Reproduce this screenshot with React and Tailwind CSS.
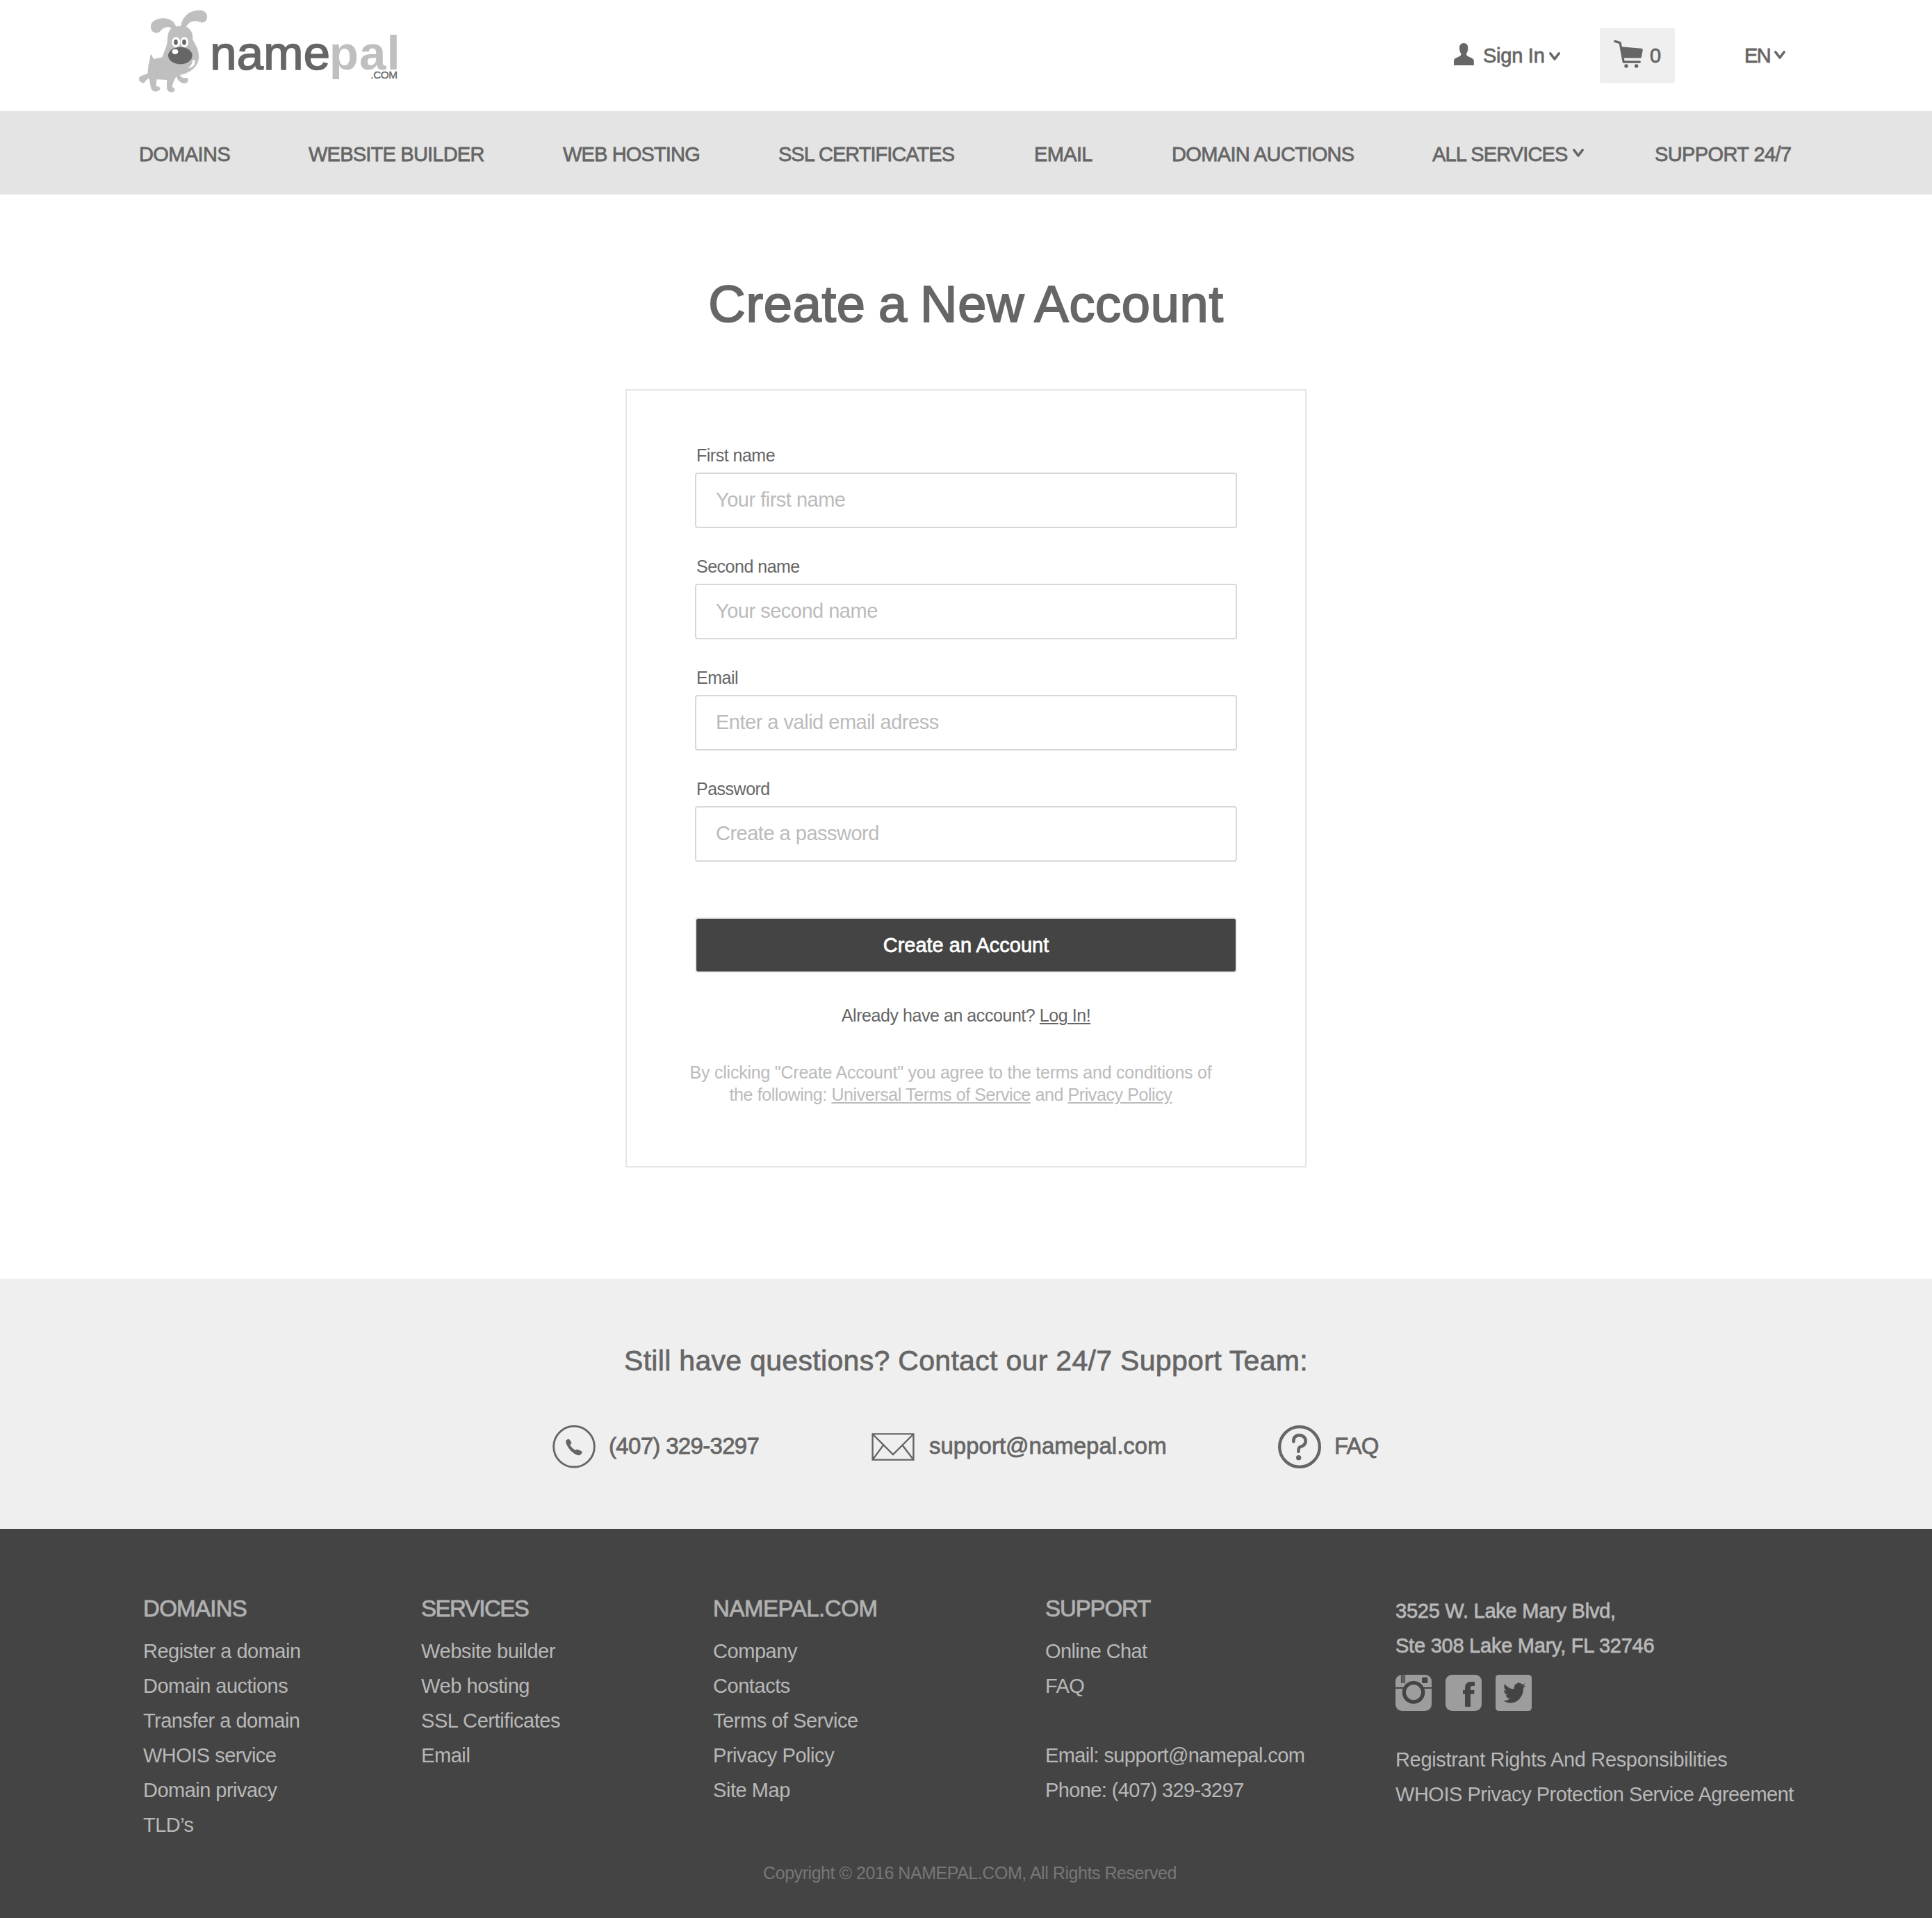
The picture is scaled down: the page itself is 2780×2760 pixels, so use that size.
const MEDIUM = '[-webkit-text-stroke:0.026em_currentColor]';

const navItems = [
  ['DOMAINS', 'tracking-[-0.6px]'],
  ['WEBSITE BUILDER', 'tracking-[-0.78px]'],
  ['WEB HOSTING', 'tracking-[-0.85px]'],
  ['SSL CERTIFICATES', 'tracking-[-0.97px]'],
  ['EMAIL', 'tracking-[-0.65px]'],
  ['DOMAIN AUCTIONS', 'tracking-[-0.65px]'],
  ['ALL SERVICES', 'tracking-[-0.85px]'],
  ['SUPPORT 24/7', 'tracking-[-0.6px]'],
];

const fields = [
  ['First name', 'Your first name', 'text'],
  ['Second name', 'Your second name', 'text'],
  ['Email', 'Enter a valid email adress', 'email'],
  ['Password', 'Create a password', 'password'],
];

const footerColumns = [
  {
    title: 'DOMAINS',
    titleTracking: 'tracking-[-0.7px]',
    listTracking: 'tracking-[-0.52px]',
    items: ['Register a domain', 'Domain auctions', 'Transfer a domain', 'WHOIS service', 'Domain privacy', 'TLD’s'],
  },
  {
    title: 'SERVICES',
    titleTracking: 'tracking-[-1.5px]',
    listTracking: 'tracking-[-0.42px]',
    items: ['Website builder', 'Web hosting', 'SSL Certificates', 'Email'],
  },
  {
    title: 'NAMEPAL.COM',
    titleTracking: 'tracking-[-0.45px]',
    listTracking: 'tracking-[-0.45px]',
    items: ['Company', 'Contacts', 'Terms of Service', 'Privacy Policy', 'Site Map'],
  },
  {
    title: 'SUPPORT',
    titleTracking: 'tracking-[-1.1px]',
    listTracking: 'tracking-[-0.6px]',
    items: ['Online Chat', 'FAQ', '', 'Email: support@namepal.com', 'Phone: (407) 329-3297'],
  },
];

function Chevron({ className }) {
  return (
    <svg viewBox="0 0 16 13" className={`h-[13px] w-4 ${className}`} fill="none" stroke="currentColor" strokeWidth="3.6" strokeLinecap="round" strokeLinejoin="round">
      <path d="M1.9 2 L8 10 L14.1 2" />
    </svg>
  );
}

function Logo() {
  return (
    <svg viewBox="60 0 1116 450" className="h-[150px] w-[372px] overflow-visible">
      <g fill="#bfbfbf">
        <path d="M222 122C216 92 190 76 158 79C126 83 108 98 111 120C114 141 134 147 150 137C160 126 176 109 200 122Z" />
        <path d="M240 120C243 78 272 44 322 44C346 45 355 58 354 74C352 95 336 101 322 95C302 86 274 90 262 120Z" />
        <path d="M205 118C225 110 258 111 272 120C290 133 293 152 292 172C305 193 319 215 318 247C317 286 286 314 237 324C240 332 248 338 258 337C269 334 275 340 271 350C266 362 251 363 240 355C231 351 226 342 221 330C212 345 205 362 203 375C212 379 216 384 214 391C210 401 189 402 182 388C178 375 180 360 181 345L137 343C135 355 133 365 135 373C148 372 156 380 149 388C140 397 125 397 118 390C109 380 108 362 107 350L102 337L88 349C85 360 75 362 69 354C59 350 58 338 62 333C74 322 90 324 98 315C99 300 99 285 104 268C109 255 105 243 112 234C117 239 117 247 124 255L160 247C168 225 179 204 183 178C183 158 184 132 205 118Z" />
      </g>
      <g fill="#fff">
        <ellipse cx="220" cy="182" rx="18" ry="22" />
        <ellipse cx="256" cy="182" rx="17" ry="22" />
        <path d="M299 257C308 276 293 294 270 293C282 287 292 276 290 262Z" />
      </g>
      <g fill="#666">
        <ellipse cx="219" cy="182" rx="8.5" ry="12" />
        <ellipse cx="255" cy="182" rx="8.5" ry="12" />
        <ellipse cx="238" cy="240" rx="52" ry="37" />
      </g>
      <ellipse cx="216" cy="223" rx="13" ry="11" fill="#fff" />
      <text x="366.5" y="298.5" fontSize="206" letterSpacing="1" fill="#666" stroke="#666" strokeWidth="5">name</text>
      <text x="881" y="298.5" fontSize="207" fontWeight="700" letterSpacing="3.5" fill="#bfbfbf">pal</text>
      <text x="1060" y="340" fontSize="46" letterSpacing="-1.3" fill="#666" stroke="#666" strokeWidth="1">.COM</text>
    </svg>
  );
}

function UserIcon() {
  return (
    <svg viewBox="0 0 29 32" className="h-8 w-[29px]" fill="currentColor">
      <path d="M14.2 0C18 0 20.6 2.8 20.4 7.5C20.2 11.5 18.8 14 18 15.4C17.8 18 19.5 18.7 23 20.2C27 22 28.8 23 28.8 26V32H0V26C0 23 1.5 22 5.4 20.2C9 18.7 10.6 18 10.4 15.4C9.4 14 8.2 11.5 8 7.5C7.8 2.8 10.4 0 14.2 0Z" />
    </svg>
  );
}

function CartIcon() {
  return (
    <svg viewBox="0 0 43 41" className="h-[41px] w-[43px]" fill="currentColor">
      <path d="M1.8 2.4 L9.2 4.6 L14.2 32.1 H37.4" fill="none" stroke="currentColor" strokeWidth="3.2" strokeLinecap="round" strokeLinejoin="round" />
      <path d="M10.8 10.3 L40 12.7 Q42 13 41.8 15 L40 25 Q39.6 26.6 38 26.6 H13.8Z" />
      <circle cx="18" cy="38" r="2.7" />
      <circle cx="32.6" cy="38" r="2.7" />
    </svg>
  );
}

function PhoneIcon() {
  return (
    <svg viewBox="30 33 186 186" className="size-[62px]" fill="currentColor">
      <circle cx="123" cy="125" r="88" fill="none" stroke="currentColor" strokeWidth="8.5" />
      <path d="M90 97Q96 91 103 94L111 106Q114 112 106 117Q112 131 128 140Q134 135 140 138L156 145Q161 150 153 158Q147 164 138 162Q125 158 110 144Q93 125 88 108Q86 101 90 97Z" />
    </svg>
  );
}

function MailIcon() {
  return (
    <svg viewBox="0 0 62 40" className="h-10 w-[62px]" fill="none" stroke="currentColor" strokeWidth="2.4">
      <path d="M1.6 1.4H60.4V38.6H1.6ZM2 2L31 31L60 2M2 38L17.2 17.4M60 38L44.4 17.6" />
    </svg>
  );
}

function QuestionIcon() {
  return (
    <svg viewBox="27 33 186 186" className="size-[62px]" fill="currentColor">
      <circle cx="120" cy="126" r="86.5" fill="none" stroke="currentColor" strokeWidth="13" />
      <path d="M94 103V100C94 83 106 75.5 121 76C137 77 146 87 146 101C146 116 135 122 125 125.5C117 128 115 132 115 146" fill="none" stroke="currentColor" strokeWidth="14" strokeLinecap="round" />
      <circle cx="116" cy="173" r="11" />
    </svg>
  );
}

function SocialIcons() {
  return (
    <div className="mt-[17px] flex gap-5">
      <svg viewBox="54 60 156 156" className="size-[52px]">
        <rect x="54" y="60" width="156" height="156" rx="28" fill="#9d9d9d" />
        <path d="M54 117H210" stroke="#444" strokeWidth="6" />
        <path d="M80 60V96M87 60V96M94 60V96" stroke="#444" strokeWidth="4.6" />
        <rect x="168" y="71" width="25" height="25" rx="5" fill="#444" />
        <circle cx="132" cy="136" r="41" fill="#9d9d9d" stroke="#444" strokeWidth="16" />
      </svg>
      <svg viewBox="270 60 156 156" className="size-[52px]">
        <rect x="270" y="60" width="156" height="156" rx="28" fill="#9d9d9d" />
        <path d="M354 198V143H345V126H354V118C354 98 364 90 380 90H396V108H386C380 108 378 111 378 116V126H395L393 143H378V198Z" fill="#444" />
      </svg>
      <svg viewBox="486 60 156 156" className="size-[52px]">
        <rect x="486" y="60" width="156" height="156" rx="14" fill="#9d9d9d" />
        <path
          transform="translate(519 85.5) scale(4.04 4.4)"
          fill="#444"
          d="M23.953 4.57a10 10 0 01-2.825.775 4.958 4.958 0 002.163-2.723c-.951.555-2.005.959-3.127 1.184a4.92 4.92 0 00-8.384 4.482C7.69 8.095 4.067 6.13 1.64 3.162a4.822 4.822 0 00-.666 2.475c0 1.71.87 3.213 2.188 4.096a4.904 4.904 0 01-2.228-.616v.06a4.923 4.923 0 003.946 4.827 4.996 4.996 0 01-2.212.085 4.936 4.936 0 004.604 3.417 9.867 9.867 0 01-6.102 2.105c-.39 0-.779-.023-1.17-.067a13.995 13.995 0 007.557 2.209c9.053 0 13.998-7.496 13.998-13.985 0-.21 0-.42-.015-.63A9.935 9.935 0 0024 4.59z"
        />
      </svg>
    </div>
  );
}

export default function App() {
  return (
    <div className="min-h-[2760px] w-[2780px] bg-white font-['Liberation_Sans',Arial,sans-serif] text-[29px] text-[#666]">
      <header className="flex h-40 items-center pr-[211px] pl-[200px]">
        <div className="h-40">
          <Logo />
        </div>
        <div className={`ml-auto flex items-center ${MEDIUM}`}>
          <div className="flex w-[210px] items-center">
            <div className="mb-1">
              <UserIcon />
            </div>
            <span className="ml-[13px] w-[95px] pt-px tracking-[-0.25px] whitespace-nowrap">Sign In</span>
            <Chevron className="mt-0.5" />
          </div>
          <div className="flex h-20 w-[108px] items-center rounded-[4px] bg-[#efefef] pl-5">
            <div className="mb-1.5">
              <CartIcon />
            </div>
            <span className="ml-[9px] pt-px">0</span>
          </div>
          <div className="ml-[100px] flex items-center">
            <span className="w-[43px] pt-px tracking-[-1.5px]">EN</span>
            <Chevron className="mb-0.5" />
          </div>
        </div>
      </header>

      <nav className="grid h-[120px] grid-cols-[244px_366px_310px_368px_198px_375px_320px_auto] items-center bg-[#e4e4e4] pt-[5px] pl-[200px]">
        {navItems.map(([label, tracking]) => (
          <a key={label} className={`flex items-center whitespace-nowrap ${MEDIUM} ${tracking}`}>
            {label}
            {label === 'ALL SERVICES' && <Chevron className="mb-1 ml-[7px]" />}
          </a>
        ))}
      </nav>

      <main className="flex h-[1560px] flex-col items-center pt-[118px]">
        <h1 className={`text-[74px] leading-[80px] tracking-[0.7px] [word-spacing:-3px] ${MEDIUM}`}>Create a New Account</h1>
        <form className="mt-[82px] h-[1120px] w-[980px] border-2 border-[#e5e5e5] px-[98px] pt-[78px]">
          {fields.map(([label, hint, type]) => (
            <label key={label} className="block h-40">
              <span className="block h-10 pl-0.5 text-[25px] leading-[30px] tracking-[-0.5px]">{label}</span>
              <input
                type={type}
                placeholder={hint}
                className="block h-20 w-[780px] rounded-[4px] border-2 border-[#d8d8d8] pb-0.5 pl-7 tracking-[-0.5px] placeholder:text-[#bbb]"
              />
            </label>
          ))}
          <button type="button" className={`mt-10 block h-20 w-[780px] rounded-[4px] border-2 border-[#eee] bg-[#444] bg-clip-padding pt-px text-white ${MEDIUM}`}>
            Create an Account
          </button>
          <p className="mt-[46px] text-center text-[25px] leading-[30px] tracking-[-0.44px]">
            Already have an account? <a className="underline decoration-2 underline-offset-2">Log In!</a>
          </p>
          <p className="mt-[51px] -ml-11 text-center text-[25px] leading-8 tracking-[-0.23px] whitespace-nowrap text-[#bbb]">
            By clicking "Create Account" you agree to the terms and conditions of
            <br />
            <span className="tracking-[-0.4px]">
              the following: <a className="underline decoration-2 underline-offset-2">Universal Terms of Service</a> and{' '}
              <a className="underline decoration-2 underline-offset-2">Privacy Policy</a>
            </span>
          </p>
        </form>
      </main>

      <section className={`h-[360px] bg-[#efefef] pt-[88px] ${MEDIUM}`}>
        <h2 className="text-center text-[41px] leading-[60px] tracking-[0.31px]">Still have questions? Contact our 24/7 Support Team:</h2>
        <div className="mt-[63px] grid grid-cols-[459px_585px_auto] pl-[795px] text-[33px] leading-[50px]">
          <div className="flex items-center">
            <PhoneIcon />
            <span className="ml-[19px] pb-0.5 tracking-[-0.68px]">(407) 329-3297</span>
          </div>
          <div className="flex items-center">
            <MailIcon />
            <span className="ml-[21px] pb-0.5">support@namepal.com</span>
          </div>
          <div className="flex items-center">
            <QuestionIcon />
            <span className="ml-[19px] pb-0.5 tracking-[-0.8px]">FAQ</span>
          </div>
        </div>
      </section>

      <footer className="h-[560px] bg-[#444] pt-[90px] text-[#b8b8b8]">
        <div className="grid h-[361px] grid-cols-[400px_420px_478px_504px_auto] pl-[206px] leading-[50px] whitespace-nowrap">
          {footerColumns.map(({ title, titleTracking, listTracking, items }) => (
            <div key={title}>
              <h3 className={`h-[61px] text-[33px] text-[#b0b0b0] ${titleTracking} ${MEDIUM}`}>{title}</h3>
              <ul className={listTracking}>
                {items.map((item, i) => (
                  <li key={i} className="h-[50px]">{item}</li>
                ))}
              </ul>
            </div>
          ))}
          <div className="pt-[3px]">
            <address className={`tracking-[-0.24px] not-italic ${MEDIUM}`}>
              3525 W. Lake Mary Blvd,
              <br />
              Ste 308 Lake Mary, FL 32746
            </address>
            <SocialIcons />
            <div className="mt-[45px]">
              <p className="tracking-[-0.33px]">Registrant Rights And Responsibilities</p>
              <p className="tracking-[-0.48px]">WHOIS Privacy Protection Service Agreement</p>
            </div>
          </div>
        </div>
        <p className="mt-6 pl-[11px] text-center text-[25px] leading-10 tracking-[-0.45px] text-[#777]">
          Copyright © 2016 NAMEPAL.COM, All Rights Reserved
        </p>
      </footer>
    </div>
  );
}
